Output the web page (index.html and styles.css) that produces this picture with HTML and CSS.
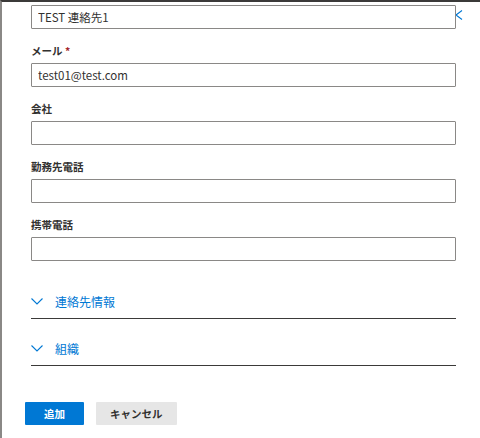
FILE: index.html
```html
<!DOCTYPE html>
<html lang="ja">
<head>
    <meta charset="UTF-8">
    <meta name="viewport" content="width=device-width, initial-scale=1.0">
    <title>連絡先の追加</title>
    <link rel="stylesheet" href="styles.css">
</head>
<body>
    <div class="panel">
        <button type="button" class="close-btn" aria-label="閉じる">
            <svg width="14" height="10" viewBox="0 0 14 10">
                <path d="M1 0.5 L13 9.5 M13 0.5 L1 9.5" stroke="#0078d4" stroke-width="1.1" fill="none"/>
            </svg>
        </button>

        <form class="contact-form">
            <div class="field first">
                <input type="text" value="TEST 連絡先1">
            </div>
            <div class="field">
                <label for="mail">メール <span class="required">*</span></label>
                <input type="text" id="mail" value="test01@test.com">
            </div>
            <div class="field">
                <label for="company">会社</label>
                <input type="text" id="company">
            </div>
            <div class="field">
                <label for="work">勤務先電話</label>
                <input type="text" id="work">
            </div>
            <div class="field">
                <label for="mobile">携帯電話</label>
                <input type="text" id="mobile">
            </div>

            <div class="sections">
                <div class="section">
                    <svg class="chevron" width="12" height="7" viewBox="0 0 12 7">
                        <path d="M0.5 0.5 L6 6 L11.5 0.5" stroke="#0078d4" stroke-width="1.1" fill="none"/>
                    </svg>
                    <span>連絡先情報</span>
                </div>
                <div class="section">
                    <svg class="chevron" width="12" height="7" viewBox="0 0 12 7">
                        <path d="M0.5 0.5 L6 6 L11.5 0.5" stroke="#0078d4" stroke-width="1.1" fill="none"/>
                    </svg>
                    <span>組織</span>
                </div>
            </div>
        </form>

        <div class="footer">
            <button type="button" class="btn primary">追加</button>
            <button type="button" class="btn">キャンセル</button>
        </div>
    </div>
</body>
</html>
```

FILE: styles.css
```css
body {
    margin: 0;
    padding: 0;
    background-color: #fff;
    font-family: "Noto Sans CJK JP", "Noto Sans", sans-serif;
    color: #323130;
}

.panel {
    position: relative;
    height: 436px;
    border-top: 2px solid #3b3a39;
    border-left: 2px solid #8a8886;
    background-color: #fff;
}

.close-btn {
    position: absolute;
    top: 8px;
    left: 447px;
    padding: 0;
    border: none;
    background: none;
    line-height: 0;
}

.contact-form {
    padding: 3px 24px 0 29px;
}

.field {
    display: flex;
    flex-direction: column;
    margin-top: 14px;
}

.field.first {
    margin-top: 0;
}

.field label {
    font-size: 10.5px;
    font-weight: 700;
    line-height: 16px;
    margin-bottom: 4px;
}

.required {
    color: #a4262c;
}

.field input {
    position: relative;
    z-index: 1;
    box-sizing: border-box;
    height: 24px;
    padding: 0 6px;
    border: 1px solid #8a8886;
    border-radius: 1px;
    background-color: #fff;
    font-family: inherit;
    font-size: 11.5px;
    color: #323130;
    outline: none;
}

.sections {
    margin-top: 11px;
}

.section {
    display: flex;
    align-items: center;
    height: 47px;
    box-sizing: border-box;
    padding-top: 12px;
    border-bottom: 1px solid #3b3a39;
    color: #0078d4;
    font-size: 12px;
}

.chevron {
    margin-right: 12px;
}

.footer {
    display: flex;
    gap: 12px;
    padding: 36px 0 0 23px;
}

.btn {
    height: 23px;
    padding: 0 14px;
    border: none;
    border-radius: 1px;
    background-color: #e6e6e6;
    font-family: inherit;
    font-size: 10.5px;
    font-weight: 700;
    color: #323130;
}

.btn.primary {
    width: 59px;
    background-color: #0078d4;
    color: #fff;
}
```
